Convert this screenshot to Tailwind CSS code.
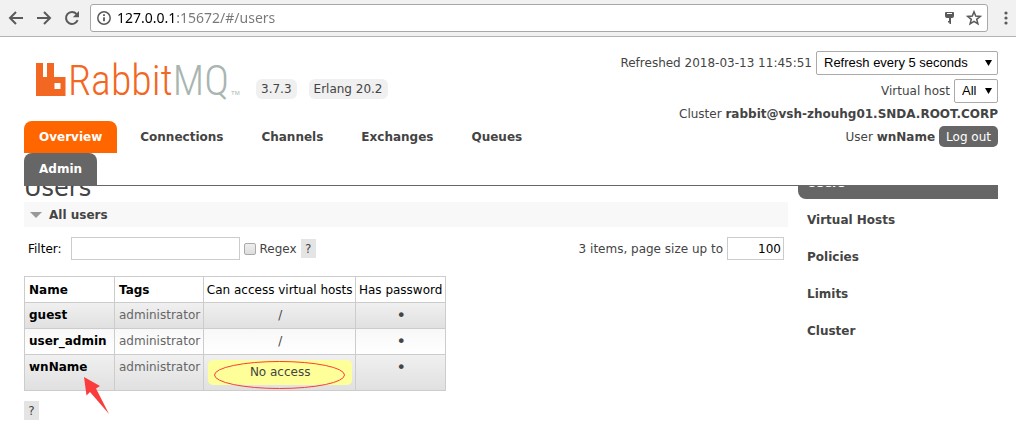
<!DOCTYPE html>
<html lang="en">

<head>
    <meta charset="UTF-8">
    <meta name="viewport" content="width=device-width, initial-scale=1.0">
    <script src="https://cdn.jsdelivr.net/npm/@tailwindcss/browser@4"></script>
    <title>RabbitMQ Management</title>
</head>

<body class="bg-white font-['DejaVu_Sans',Verdana,sans-serif] text-xs text-[#444]">

    <!-- Browser toolbar -->
    <div class="flex h-[37px] items-center border-b border-[#b4b4b4] bg-[#f1f1f1] pl-2 text-[#5a5a5a]">
        <button type="button" aria-label="Back" class="mr-3 size-4">
            <svg viewBox="0 0 16 16" fill="none" stroke="currentColor" stroke-width="2"><path d="M15 8H2.500M8 2L2 8l6 6" /></svg>
        </button>
        <button type="button" aria-label="Forward" class="mr-3 size-4">
            <svg viewBox="0 0 16 16" fill="none" stroke="currentColor" stroke-width="2"><path d="M1 8h12.500M8 2l6 6-6 6" /></svg>
        </button>
        <button type="button" aria-label="Reload" class="mr-[10px] size-4">
            <svg viewBox="0 0 16 16" fill="none" stroke="currentColor" stroke-width="2"><path d="M13.600 10.200A6 6 0 1 1 12.500 4" /><path d="M15 1v6.200H8.800z" fill="currentColor" stroke="none" /></svg>
        </button>
        <div class="flex h-7 flex-1 items-center rounded-[3px] border border-[#a8a8a8] bg-white px-[5px]">
            <svg class="mr-[5px] size-4" viewBox="0 0 16 16" fill="none" stroke="currentColor" stroke-width="1.500"><circle cx="8" cy="8" r="6.200" /><path d="M8 7.200v4M8 4.300v1.600" stroke-width="1.800" /></svg>
            <input type="text" aria-label="Address" value="127.0.0.1:15672/#/users"
                class="min-w-0 flex-1 bg-linear-to-r from-black from-[59px] to-[#777] to-[59px] bg-clip-text font-['Noto_Sans',sans-serif] text-sm text-transparent outline-none">
            <button type="button" aria-label="Saved password" class="mr-[9px] size-4">
                <svg viewBox="0 0 16 16" fill="currentColor"><path fill-rule="evenodd" d="M5 2h7a1 1 0 0 1 1 1v3a2 2 0 0 1-2 2h-1v6H8.500v-1.500H7V11h1V8H6a2 2 0 0 1-2-2V3a1 1 0 0 1 1-1zM6 3v1h5V3z" /></svg>
            </button>
            <button type="button" aria-label="Bookmark" class="size-4">
                <svg viewBox="0 0 16 16" fill="none" stroke="currentColor" stroke-width="1.500"><path d="M8 1.800l1.700 4.300 4.500.3-3.500 2.900 1.200 4.500L8 11.300l-3.900 2.500 1.200-4.500L1.800 6.400l4.500-.3z" /></svg>
            </button>
        </div>
        <button type="button" aria-label="Menu" class="mr-[2px] ml-[10px] size-4">
            <svg viewBox="0 0 16 16" fill="currentColor"><circle cx="8" cy="3" r="1.600" /><circle cx="8" cy="8" r="1.600" /><circle cx="8" cy="13" r="1.600" /></svg>
        </button>
    </div>

    <!-- Header, stays above the scrolled content -->
    <header class="relative z-10 bg-white">
        <div class="mr-[18px] ml-6 flex justify-between border-b border-[#666] pt-[14px]">
            <div class="w-[560px]">
                <div class="flex h-[70px] items-start pl-3">
                    <a href="#/" aria-label="RabbitMQ" class="mr-4">
                        <svg class="overflow-visible" width="204" height="60" viewBox="0 0 204 60">
                            <path fill="#f26722" fill-rule="evenodd" d="M0 12h7v14h4V12h7v14h11.500v19H0zM18.500 32v6h6v-6z" />
                            <text x="32" y="44" font-family="'Roboto Condensed','Lato',sans-serif" font-weight="300" font-size="42" fill="#f26722">Rabbit<tspan fill="#a9b5b0">MQ</tspan></text>
                            <text x="195" y="44" font-family="'Liberation Sans',sans-serif" font-size="6" fill="#a9b5b0">TM</text>
                        </svg>
                    </a>
                    <span class="mt-7 mr-3 rounded-md bg-[#f0f0f0] px-[5px] py-[2px]">3.7.3</span>
                    <span class="mt-7 rounded-md bg-[#f0f0f0] px-[5px] py-[2px]">Erlang 20.2</span>
                </div>
                <nav>
                    <ul class="flex flex-wrap gap-x-2 font-bold leading-8">
                        <li><a href="#/" class="block rounded-t-lg bg-[#f60] px-[15px] text-white">Overview</a></li>
                        <li><a href="#/connections" class="block px-[15px]">Connections</a></li>
                        <li><a href="#/channels" class="block px-[15px]">Channels</a></li>
                        <li><a href="#/exchanges" class="block px-[15px]">Exchanges</a></li>
                        <li><a href="#/queues" class="block px-[15px]">Queues</a></li>
                        <li><a href="#/users" class="block rounded-t-lg bg-[#666] px-[15px] text-white">Admin</a></li>
                    </ul>
                </nav>
            </div>
            <div class="flex flex-col items-end">
                <div class="mb-1 flex items-center gap-1">
                    <label for="update-every">Refreshed 2018-03-13 11:45:51</label>
                    <div class="relative">
                        <select id="update-every" class="h-6 w-[182px] appearance-none rounded-[2px] border border-[#aaa] bg-white pl-[7px] font-['Liberation_Sans',Arial,sans-serif] text-[13px] text-black">
                            <option>Refresh every 5 seconds</option>
                        </select>
                        <svg class="pointer-events-none absolute top-[9px] right-[6px] h-[6px] w-[7px]" viewBox="0 0 7 6"><path d="M0 0h7L3.500 6z" /></svg>
                    </div>
                </div>
                <div class="mb-[3px] flex items-center gap-1">
                    <label for="show-vhost">Virtual host</label>
                    <div class="relative">
                        <select id="show-vhost" class="h-6 w-11 appearance-none rounded-[2px] border border-[#aaa] bg-white pl-[7px] font-['Liberation_Sans',Arial,sans-serif] text-[13px] text-black">
                            <option>All</option>
                        </select>
                        <svg class="pointer-events-none absolute top-[9px] right-[6px] h-[6px] w-[7px]" viewBox="0 0 7 6"><path d="M0 0h7L3.500 6z" /></svg>
                    </div>
                </div>
                <p class="mb-1">Cluster <b>rabbit@vsh-zhouhg01.SNDA.ROOT.CORP</b></p>
                <div class="flex items-center gap-1">
                    <p>User <b>wnName</b></p>
                    <button type="button" class="h-[21px] rounded-[5px] bg-[#666] px-[7px] text-white">Log out</button>
                </div>
            </div>
        </div>
    </header>

    <div class="-mt-3 mr-[18px] ml-6 flex gap-[10px]">
        <main class="min-w-0 flex-1">
            <h1 class="text-2xl leading-7">Users</h1>

            <section>
                <h2 class="flex h-[25px] items-center gap-[7px] bg-[#f8f8f8] pl-[6px] font-bold">
                    <svg class="h-[6px] w-3" viewBox="0 0 12 6"><path d="M0 0h12L6 6z" fill="#999" /></svg>
                    All users
                </h2>

                <div class="mt-[10px] flex items-center pr-1 pl-1">
                    <label for="filter" class="mr-[9px] text-black">Filter:</label>
                    <input id="filter" type="text" class="mr-1 h-[23px] w-[169px] border border-[#ccc] px-1">
                    <input id="regex" type="checkbox" class="mr-1 size-3 appearance-none rounded-[2px] border border-[#aaa] bg-linear-to-b from-[#eee] to-[#ddd]">
                    <label for="regex" class="mr-1">Regex</label>
                    <button type="button" aria-label="Help on filter" class="h-[19px] w-[15px] bg-[#e4e4e4]">?</button>
                    <label for="pagesize" class="mr-1 ml-auto">3 items, page size up to</label>
                    <input id="pagesize" type="text" value="100" class="h-[23px] w-[57px] border border-[#ccc] px-[2px] text-right text-black">
                </div>

                <!-- Users table -->
                <div class="relative mt-4">
                    <table class="border-collapse whitespace-nowrap text-center [&_td]:border [&_td]:border-[#ccc] [&_td]:pr-[3px] [&_td]:pl-1 [&_td]:align-top [&_th]:h-[26px] [&_th]:border [&_th]:border-[#ccc]">
                        <thead class="text-black">
                            <tr>
                                <th class="w-[90px] px-1 text-left">Name</th>
                                <th class="w-[89px] px-1 text-left">Tags</th>
                                <th class="w-[152px] px-[2px] font-normal">Can access virtual hosts</th>
                                <th class="w-[90px] px-[2px] font-normal">Has password</th>
                            </tr>
                        </thead>
                        <tbody class="leading-[25px]">
                            <tr class="bg-linear-to-b from-[#f0f0f0] to-[#e0e0e0]">
                                <td class="text-left font-bold text-black">guest</td>
                                <td class="text-left text-[#666]">administrator</td>
                                <td>/</td>
                                <td class="text-base leading-[25px]">•</td>
                            </tr>
                            <tr class="bg-linear-to-b from-[#f8f8f8] to-white">
                                <td class="text-left font-bold text-black">user_admin</td>
                                <td class="text-left text-[#666]">administrator</td>
                                <td>/</td>
                                <td class="text-base leading-[25px]">•</td>
                            </tr>
                            <tr class="bg-linear-to-b from-[#f0f0f0] to-[#e0e0e0]">
                                <td class="text-left font-bold text-black">wnName</td>
                                <td class="text-left text-[#666]">administrator</td>
                                <td class="py-[5px]">
                                    <p class="rounded-[5px] bg-[#ff9]">No access</p>
                                </td>
                                <td class="text-base leading-[25px]">•</td>
                            </tr>
                        </tbody>
                    </table>
                    <!-- Red annotations -->
                    <svg class="pointer-events-none absolute top-0 left-0" width="422" height="140" viewBox="0 0 422 140">
                        <ellipse cx="255.500" cy="99" rx="65" ry="13.500" fill="none" stroke="#fa3c3c" />
                        <path d="M60 101l16 9-4 2.500L85 138l-19-22-3.500 3.500z" fill="#fa3c3c" />
                    </svg>
                </div>

                <button type="button" aria-label="Help on users" class="mt-[10px] h-[19px] w-[15px] bg-[#e4e4e4]">?</button>
            </section>
        </main>

        <aside class="w-[200px]">
            <ul class="font-bold leading-[37px]">
                <li><a href="#/users" class="mb-[3px] block h-[25px] rounded-l-lg bg-[#666] pl-[9px] leading-[19px] text-white">Users</a></li>
                <li><a href="#/vhosts" class="block pl-[9px]">Virtual Hosts</a></li>
                <li><a href="#/policies" class="block pl-[9px]">Policies</a></li>
                <li><a href="#/limits" class="block pl-[9px]">Limits</a></li>
                <li><a href="#/cluster" class="block pl-[9px]">Cluster</a></li>
            </ul>
        </aside>
    </div>

</body>

</html>
